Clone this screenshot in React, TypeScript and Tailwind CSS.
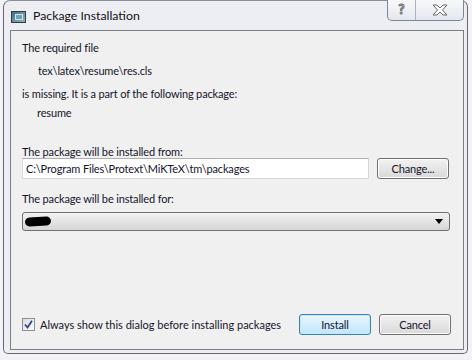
import React from "react";

const font = { fontFamily: 'Lato, "Liberation Sans", sans-serif' };

function WinButton({ label, focused }: { label: string; focused?: boolean }) {
  return (
    <button
      className={
        "w-[72px] h-[21px] rounded-[3px] border text-[11px] leading-none text-[#14142b] " +
        (focused
          ? "border-[#3c7fb1] bg-gradient-to-b from-[#eaf6fd] to-[#bee6fd] shadow-[inset_0_0_0_1px_#c5e8fb]"
          : "border-[#707070] bg-gradient-to-b from-[#f2f2f2] to-[#d9d9d9] shadow-[inset_0_0_0_1px_#fcfcfc]")
      }
    >
      {label}
    </button>
  );
}

export default function App() {
  return (
    <div className="w-[472px] h-[360px] bg-[#f3f3f7] overflow-hidden pl-[3px] text-[#14142b] whitespace-nowrap" style={font}>
      <div className="w-[465px] h-[354px] rounded-t-[7px] rounded-b-[5px] border border-[#666a72] border-t-[#8a8e96] bg-[#eceef4] flex flex-col">
        {/* title bar */}
        <div className="h-[29px] flex items-start shrink-0">
          <div className="mt-[10px] ml-[7px] w-[15px] h-[12px] border border-[#3a3a3a] bg-gradient-to-br from-[#3f6f8f] to-[#8fb6b0] flex items-center justify-center">
            <div className="w-[8px] h-[6px] bg-[#6fa0c0] border border-[#cfe2ee]" />
          </div>
          <div className="ml-[7px] mt-[7px] text-[12.3px] leading-[16px] text-[#111]">Package Installation</div>
          <div className="ml-auto mr-[3px] -mt-px flex h-[21px] border border-[#7b8794] border-t-0 rounded-b-[5px] bg-gradient-to-b from-[#f7f8fa] to-[#e4e8ee] overflow-hidden">
            <div className="w-[28px] flex items-center justify-center border-r border-[#a9b2bd] text-[13px] font-bold text-white [-webkit-text-stroke:1px_#6a6a6a]">
              ?
            </div>
            <div className="w-[47px] flex items-center justify-center">
              <svg width="16" height="12" viewBox="0 0 16 12">
                <polygon
                  points="1,1 5,1 8,4 11,1 15,1 10.5,6 15,11 11,11 8,8 5,11 1,11 5.5,6"
                  fill="#ffffff"
                  stroke="#6a6a6a"
                  strokeWidth="1"
                />
              </svg>
            </div>
          </div>
        </div>

        {/* client area */}
        <div className="ml-[6px] w-[454px] h-[320px] border border-[#7a7f88] bg-[#f0f0f0] pl-[11px] pr-[12px] flex flex-col text-[11px] leading-[16px] tracking-[-0.15px]">
          <div className="mt-[9px]">The required file</div>
          <div className="mt-[7px] ml-[16px]">tex\latex\resume\res.cls</div>
          <div className="mt-[7px]">is missing. It is a part of the following package:</div>
          <div className="mt-[3px] ml-[15px]">resume</div>

          <div className="mt-[23px]">The package will be installed from:</div>
          <div className="-mt-[2px] flex items-center">
            <div className="w-[347px] h-[21px] bg-white border border-[#d5d8de] border-t-[#abadb3] flex items-center pl-[3px]">
              C:\Program Files\Protext\MiKTeX\tm\packages
            </div>
            <div className="ml-[8px]">
              <WinButton label="Change..." />
            </div>
          </div>

          <div className="mt-[12px]">The package will be installed for:</div>
          <div className="mt-[5px] w-[428px] h-[19px] rounded-[3px] border border-[#707070] bg-gradient-to-b from-[#f2f2f2] to-[#d6d6d6] flex items-center pl-[2px] pr-[6px]">
            <div className="w-[26px] h-[9px] rounded-full bg-black -rotate-3" />
            <svg className="ml-auto" width="8" height="5" viewBox="0 0 8 5">
              <polygon points="0,0 8,0 4,5" fill="#000" />
            </svg>
          </div>

          <div className="mt-auto mb-[14px] flex items-center">
            <div className="w-[13px] h-[13px] border border-[#8f8f8f] bg-gradient-to-br from-[#dcdcdc] to-[#fbfbfb] flex items-center justify-center">
              <svg width="9" height="9" viewBox="0 0 9 9">
                <path d="M1 4.5 L3.5 7.5 L8 0.8" fill="none" stroke="#2c4a8a" strokeWidth="1.8" />
              </svg>
            </div>
            <div className="ml-[5px] tracking-normal">Always show this dialog before installing packages</div>
            <div className="ml-auto flex gap-[8px]">
              <WinButton label="Install" focused />
              <WinButton label="Cancel" />
            </div>
          </div>
        </div>
      </div>
    </div>
  );
}
